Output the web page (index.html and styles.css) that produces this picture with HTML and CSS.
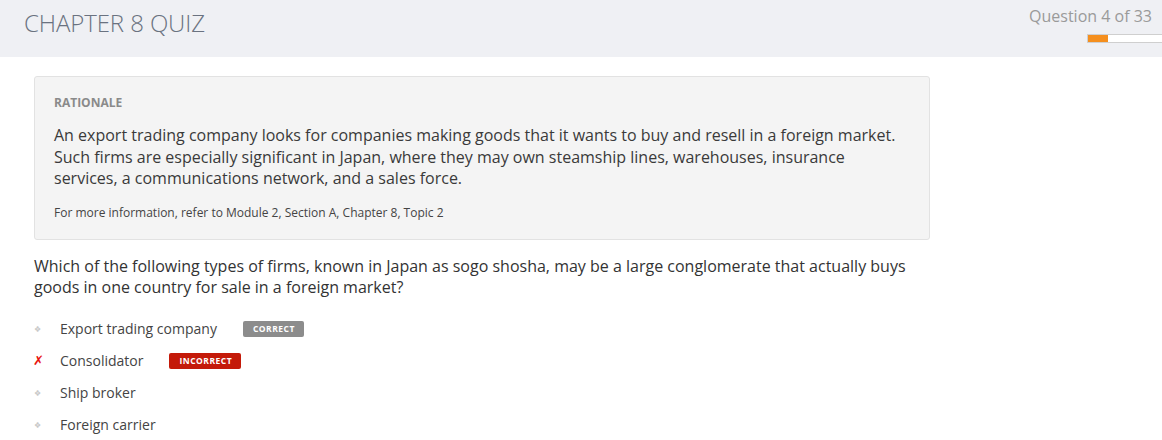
FILE: index.html
```html
<!DOCTYPE html>
<html>
<head>
<meta charset="utf-8">
<link rel="stylesheet" href="styles.css">
</head>
<body>
<header class="topbar">
  <h1 class="title">CHAPTER 8 QUIZ</h1>
  <div class="progress-wrap">
    <div class="qcount">Question 4 of 33</div>
    <div class="bar"><div class="fill" style="width:20px"></div></div>
  </div>
</header>
<main class="content">
  <section class="rationale">
    <div class="r-label">RATIONALE</div>
    <p class="r-text">An export trading company looks for companies making goods that it wants to buy and resell in a foreign market. Such firms are especially significant in Japan, where they may own steamship lines, warehouses, insurance services, a communications network, and a sales force.</p>
    <p class="r-ref">For more information, refer to Module 2, Section A, Chapter 8, Topic 2</p>
  </section>
  <p class="question">Which of the following types of firms, known in Japan as sogo shosha, may be a large conglomerate that actually buys goods in one country for sale in a foreign market?</p>
  <ul class="options">
    <li class="opt"><span class="mark"><span class="dot">&#x2756;</span></span><span class="opt-text">Export trading company</span><span class="badge correct">CORRECT</span></li>
    <li class="opt"><span class="mark"><span class="cross">&#x2717;</span></span><span class="opt-text">Consolidator</span><span class="badge incorrect">INCORRECT</span></li>
    <li class="opt"><span class="mark"><span class="dot">&#x2756;</span></span><span class="opt-text">Ship broker</span></li>
    <li class="opt"><span class="mark"><span class="dot">&#x2756;</span></span><span class="opt-text">Foreign carrier</span></li>
  </ul>
</main>
</body>
</html>
```
FILE: styles.css
```css
html, body {
  margin: 0;
  padding: 0;
  background: #ffffff;
  font-family: "Open Sans", "Liberation Sans", sans-serif;
  color: #333;
}
.topbar {
  height: 57px;
  background: #eff0f4;
  display: flex;
  justify-content: space-between;
  align-items: flex-start;
  padding-left: 24px;
  overflow: hidden;
}
.title {
  margin: 7px 0 0 0;
  font-weight: 300;
  font-size: 24px;
  line-height: 32px;
  color: #6a7280;
  letter-spacing: -0.1px;
}
.progress-wrap {
  display: flex;
  flex-direction: column;
  align-items: flex-end;
  padding-top: 5px;
}
.qcount {
  font-size: 16px;
  line-height: 22px;
  color: #9a9a9a;
  padding-right: 10px;
}
.bar {
  margin-top: 7px;
  width: 74px;
  height: 7px;
  background: #fff;
  border: 1px solid #cfcfcf;
  border-right: none;
  align-self: flex-start;
  margin-left: 58px;
}
.fill {
  height: 100%;
  background: #f58f1e;
}
.content {
  width: 896px;
  padding: 19px 0 0 34px;
}
.rationale {
  background: #f4f4f4;
  border: 1px solid #e2e2e2;
  border-radius: 3px;
  padding: 18px 19px 18px 19px;
}
.r-label {
  font-size: 12px;
  font-weight: 700;
  color: #8a8a8a;
  line-height: 16px;
}
.r-text {
  margin: 14px 0 0 0;
  font-size: 16px;
  line-height: 21.5px;
  color: #3a3a3a;
}
.r-ref {
  margin: 15px 0 0 0;
  font-size: 12px;
  line-height: 16px;
  color: #444;
}
.question {
  margin: 16px 0 0 0;
  font-size: 16px;
  line-height: 21.5px;
  color: #333;
}
.options {
  list-style: none;
  margin: 14px 0 0 0;
  padding: 0;
}
.opt {
  display: flex;
  align-items: center;
  height: 32px;
  font-size: 14px;
  color: #444;
}
.mark {
  width: 26px;
  display: inline-flex;
  align-items: center;
}
.dot {
  font-size: 8px;
  color: #c8c8c8;
}
.cross {
  color: #e8150d;
  font-size: 13px;
  font-weight: 700;
  margin-left: -1px;
  font-family: "DejaVu Sans", sans-serif;
}
.opt-text {
  display: inline-block;
}
.badge {
  margin-left: 26px;
  font-size: 8.5px;
  font-weight: 700;
  letter-spacing: 0.5px;
  color: #fff;
  padding: 2px 9px 2px 10px;
  border-radius: 2px;
  line-height: 12px;
}
.incorrect {
  background: #c41a09;
}
.correct {
  background: #8c8c8c;
}
```
